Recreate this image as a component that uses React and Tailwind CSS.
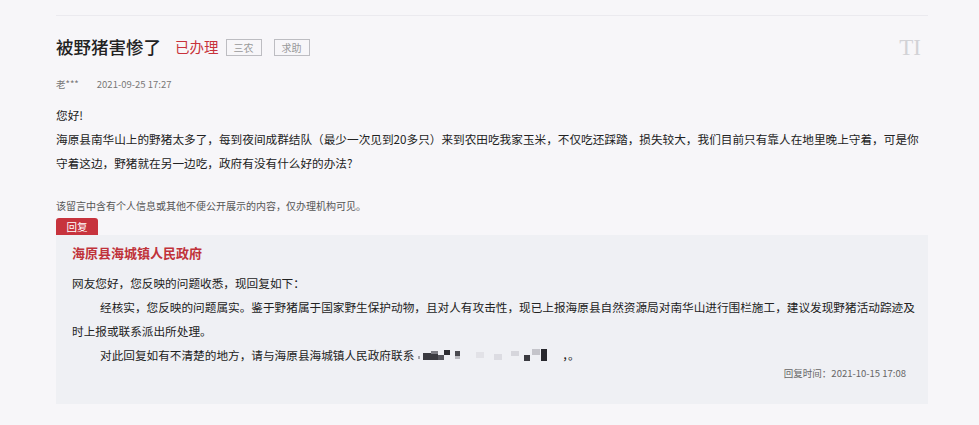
const font = "font-['Noto_Sans_CJK_SC','Noto_Sans',sans-serif]";

function Mosaic() {
  return (
    <svg width="148" height="14" viewBox="0 0 148 14" className="inline-block align-[-2px]" aria-hidden="true">
      <rect x="4" y="8" width="2" height="3" fill="#a5a5ab" />
      <rect x="9" y="5" width="15" height="7" fill="#3a3a40" />
      <rect x="17" y="3" width="7" height="3" fill="#7d7d84" />
      <rect x="24" y="7" width="6" height="5" fill="#55555c" />
      <rect x="30" y="2" width="6" height="5" fill="#2e2e33" />
      <rect x="41" y="3" width="5" height="5" fill="#4a4a50" />
      <rect x="41" y="8" width="5" height="3" fill="#b8b8be" />
      <rect x="62" y="4" width="8" height="6" fill="#e2e2e7" />
      <rect x="80" y="6" width="8" height="6" fill="#dcdce2" />
      <rect x="97" y="3" width="8" height="5" fill="#d6d6dc" />
      <rect x="110" y="7" width="6" height="6" fill="#3a3a40" />
      <rect x="118" y="1" width="8" height="6" fill="#c4c4ca" />
      <rect x="127" y="1" width="6" height="12" fill="#28282d" />
    </svg>
  );
}

export default function App() {
  return (
    <div className={`min-h-[425px] bg-[#f7f6f9] ${font} text-[#333]`}>
      <div className="ml-[56px] w-[872px] pt-[15px]">
        <div className="border-t border-[#ebeaef]">
          <div className="mt-[19px] flex h-[24px] items-center">
            <h1 className="text-[17.5px] font-medium leading-none text-[#222]">被野猪害惨了</h1>
            <span className="ml-[14px] text-[14.5px] leading-none text-[#c8323b]">已办理</span>
            <span className="ml-[7px] flex h-[17px] w-[36px] items-center justify-center border border-[#bdbdc2] text-[10px] text-[#999]">三农</span>
            <span className="ml-[12px] flex h-[17px] w-[36px] items-center justify-center border border-[#bdbdc2] text-[10px] text-[#999]">求助</span>
            <span className="ml-auto mr-[7px] font-['Liberation_Serif',serif] text-[23px] leading-none text-[#d2d2d6]">TI</span>
          </div>

          <div className="mt-[18px] flex h-[14px] items-center text-[9.5px] text-[#777]">
            <span>老***</span>
            <span className="ml-[18px]">2021-09-25 17:27</span>
          </div>

          <div className="mt-[12px] w-[880px] text-[11.65px] leading-[24px] text-[#222]">
            <p>您好!</p>
            <p>
              海原县南华山上的野猪太多了，每到夜间成群结队（最少一次见到20多只）来到农田吃我家玉米，不仅吃还踩踏，损失较大，我们目前只有靠人在地里晚上守着，可是你
              <br />
              守着这边，野猪就在另一边吃，政府有没有什么好的办法?
            </p>
          </div>

          <p className="mt-[24px] text-[10px] leading-[14px] text-[#555]">
            该留言中含有个人信息或其他不便公开展示的内容，仅办理机构可见。
          </p>

          <div className="mt-[5px] flex h-[17px] w-[42px] items-center justify-center rounded-t-[3px] bg-[#c7333d] text-[10.5px] text-white">
            回复
          </div>

          <div className="bg-[#eff0f4] pb-[24px] pl-[16px] pr-[2px] pt-[8px]">
            <h2 className="text-[13px] font-bold leading-[20px] text-[#c0323a]">海原县海城镇人民政府</h2>
            <div className="mt-[8px] text-[11.65px] leading-[24px] text-[#222]">
              <p>网友您好，您反映的问题收悉，现回复如下：</p>
              <p className="indent-[28px]">
                经核实，您反映的问题属实。鉴于野猪属于国家野生保护动物，且对人有攻击性，现已上报海原县自然资源局对南华山进行围栏施工，建议发现野猪活动踪迹及
                <br />
                时上报或联系派出所处理。
              </p>
              <p className="indent-[28px]">
                对此回复如有不清楚的地方，请与海原县海城镇人民政府联系
                <Mosaic />
                ，。
              </p>
            </div>
            <p className="-mt-[1px] pr-[20px] text-right text-[9.5px] leading-[14px] text-[#666]">
              回复时间：2021-10-15 17:08
            </p>
          </div>
        </div>
      </div>
    </div>
  );
}
